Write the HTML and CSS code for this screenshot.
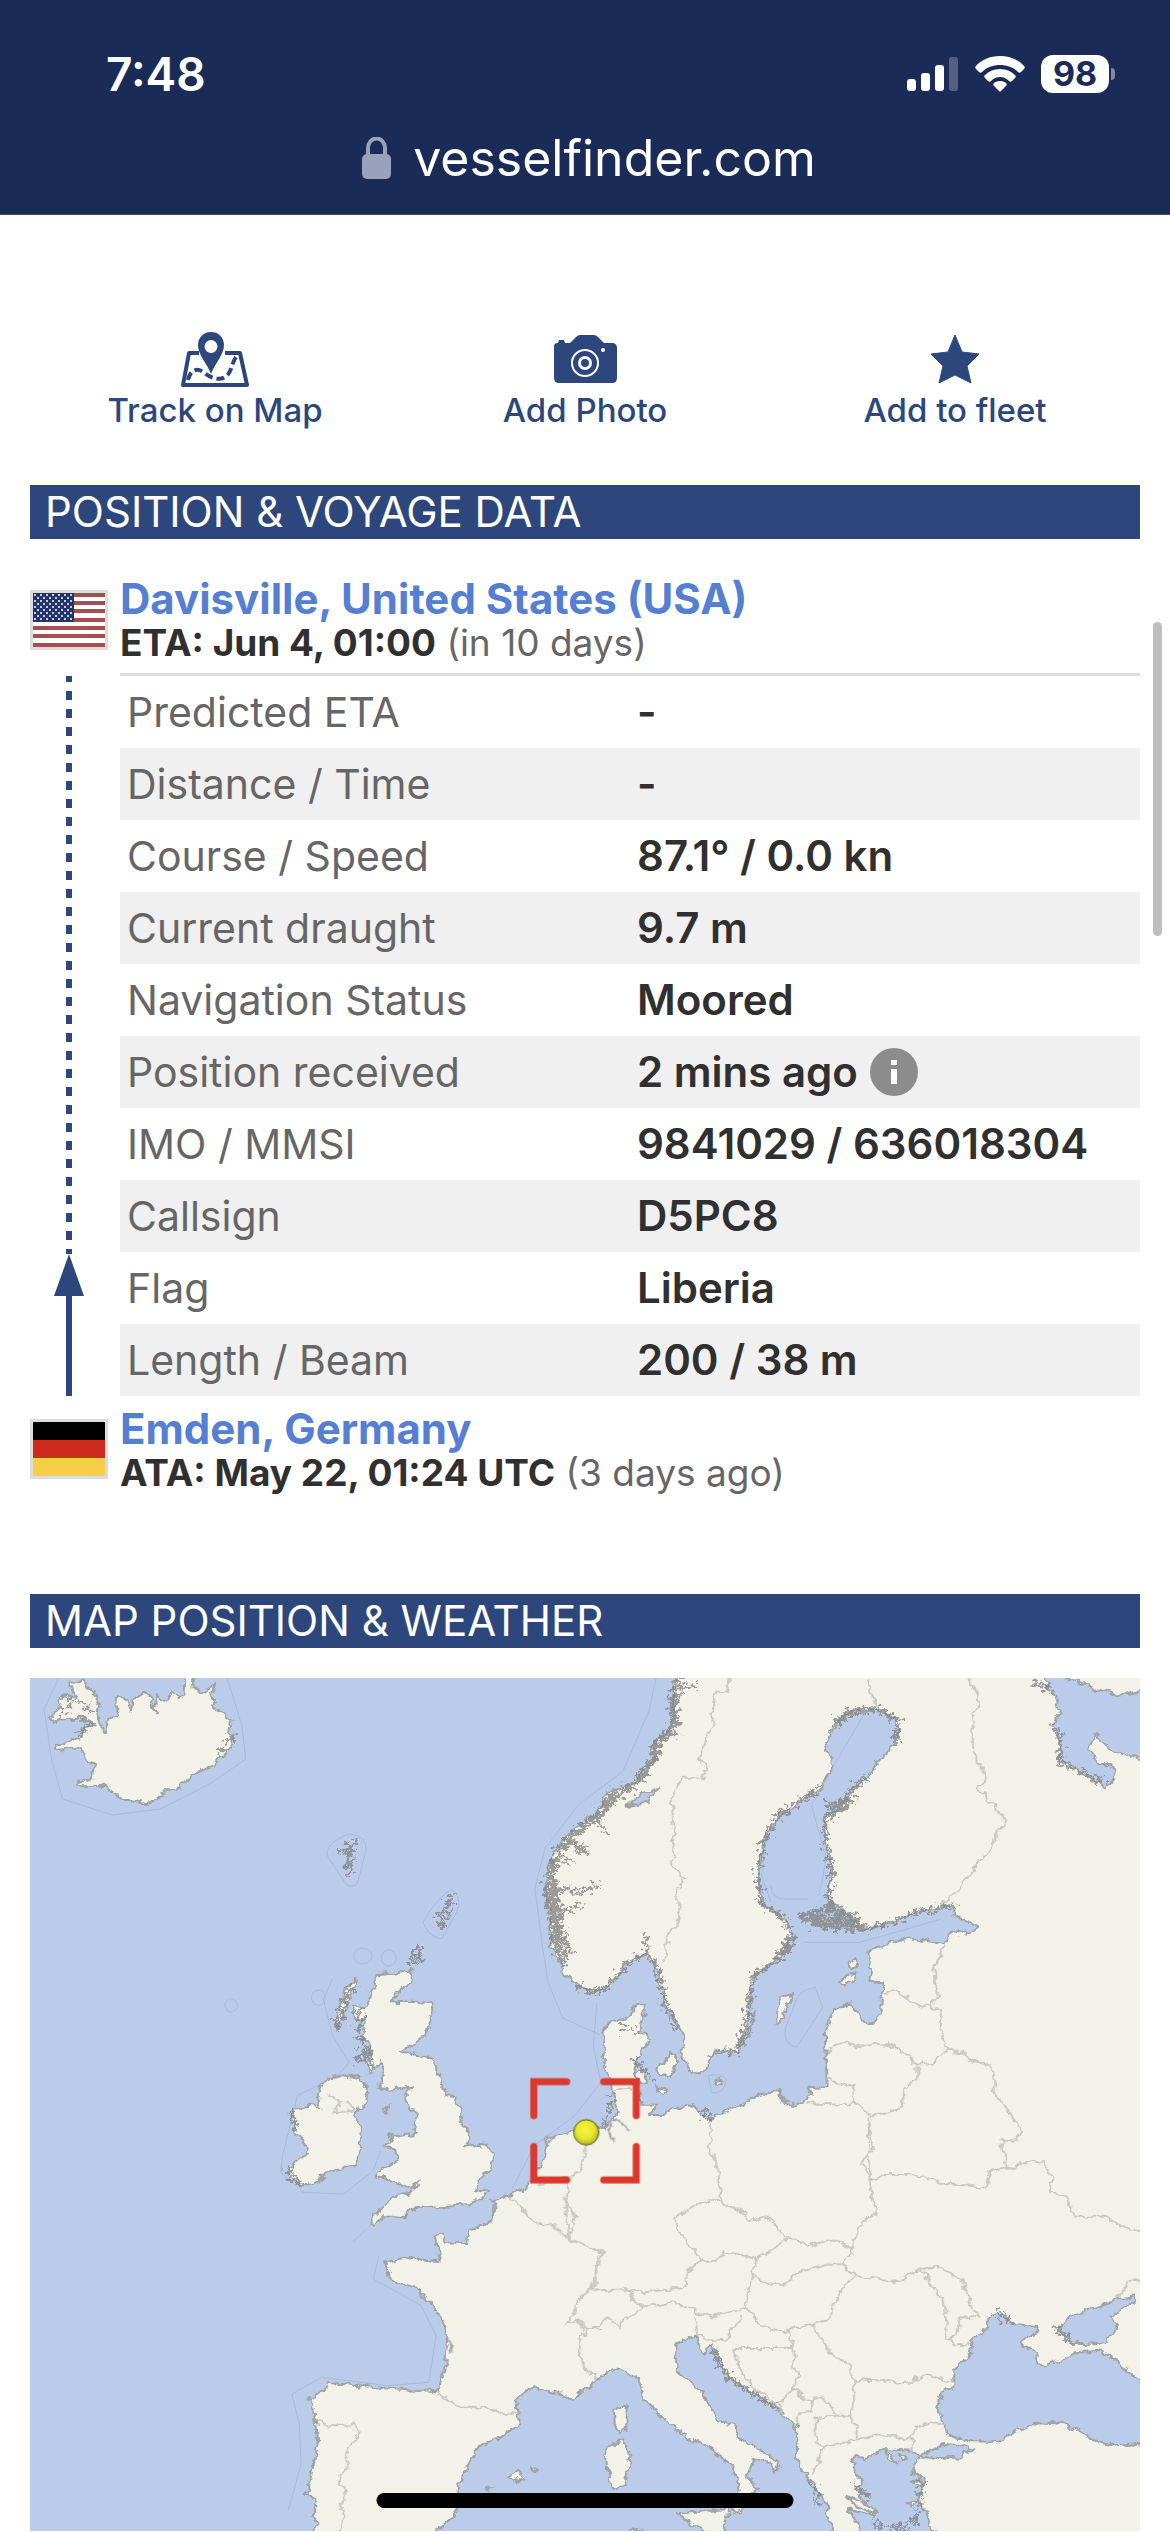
FILE: index.html
```html
<!DOCTYPE html>
<html lang="en">
<head>
<meta charset="utf-8">
<meta name="viewport" content="width=device-width">
<title>VesselFinder</title>
<link rel="stylesheet" href="styles.css">
</head>
<body>
<header class="browser">
  <div class="status">
    <span class="time">7:48</span>
    <div class="indicators">
      <svg class="signal" viewBox="0 0 52 36" aria-hidden="true"><rect x="0" y="23" width="9" height="12" rx="3"/><rect x="14" y="17" width="9" height="18" rx="3"/><rect x="28" y="9" width="9" height="26" rx="3"/><rect x="42" y="1" width="9" height="34" rx="3" opacity=".25"/></svg>
      <svg class="wifi" viewBox="0 0 50 36" aria-hidden="true"><path d="M25 0C15 0 6 4 1 10c-1 1-1 2 0 3l3 3c1 1 2 1 3 0 5-5 11-7 18-7s13 2 18 7c1 1 2 1 3 0l3-3c1-1 1-2 0-3C44 4 35 0 25 0Z"/><path d="M25 13c-6 0-11 2-15 6-1 1-1 2 0 3l3 3c1 1 2 1 3 0 2-2 5-4 9-4s7 2 9 4c1 1 2 1 3 0l3-3c1-1 1-2 0-3-4-4-9-6-15-6Z"/><path d="M25 25c-3 0-5 1-6 2s-1 2 0 3l5 5q1 1 2 0l5-5c1-1 1-2 0-3s-3-2-6-2Z"/></svg>
      <span class="battery">98</span>
    </div>
  </div>
  <div class="address">
    <svg class="lock" viewBox="0 0 29 42" aria-hidden="true"><rect y="17" width="29" height="25" rx="5"/><path d="M6 19v-8a8 9 0 0 1 17 0v8" fill="none" stroke="#9aa1bd" stroke-width="4"/></svg>
    <span>vesselfinder.com</span>
  </div>
</header>

<main class="page">
  <nav class="actions">
    <a href="#map">
      <svg class="icon" viewBox="0 0 70 56" aria-hidden="true"><path d="M19 21H9L3 53h64L60 21H45" fill="none" stroke="currentColor" stroke-width="4" stroke-linejoin="round"/><path d="M8 48c2-9 8-13 15-8 8 6 16 9 22 5 7-4 6-13 11-20" fill="none" stroke="currentColor" stroke-width="4" stroke-dasharray="8 4"/><path fill-rule="evenodd" d="M31 0C23 0 18 6 18 13c0 10 9 18 13 29 4-11 13-19 13-29C44 6 39 0 31 0Zm0 8a6 6 0 1 1 0 13 6 6 0 0 1 0-13Z"/></svg>
      <span>Track on Map</span>
    </a>
    <a href="#photo">
      <svg class="icon" viewBox="0 0 70 56" aria-hidden="true"><path d="M4 14q0-3 4-3l1-3h5l1 3h5l6-6q2-2 4-2h14q2 0 4 2l6 6h8q5 0 5 5v30q0 5-5 5H9q-5 0-5-5Z"/><circle cx="35" cy="31" r="13" fill="none" stroke="#fff" stroke-width="2"/><circle cx="35" cy="31" r="7" fill="#fff"/><circle cx="35" cy="31" r="4"/><circle cx="53" cy="18" r="2" fill="#fff"/></svg>
      <span>Add Photo</span>
    </a>
    <a href="#fleet">
      <svg class="icon" viewBox="0 0 70 56" aria-hidden="true"><path d="m35 3 7 17 17 2-12 12 4 17-16-8-16 8 4-17-12-12 17-2Z" stroke="currentColor" stroke-linejoin="round"/></svg>
      <span>Add to fleet</span>
    </a>
  </nav>

  <section class="voyage">
    <h2 class="bar">POSITION &amp; VOYAGE DATA</h2>
    <div class="route">
      <svg class="flag" viewBox="0 0 72 54" role="img" aria-label="United States">
        <defs><pattern id="stars" width="6" height="6" patternUnits="userSpaceOnUse"><circle cx="2" cy="2" r="1" fill="#fff"/><circle cx="5" cy="5" r="1" fill="#fff"/></pattern></defs>
        <path fill="#fff" d="M0 0h72v54H0z"/><path stroke="#a34f52" stroke-width="4" d="M0 2h72M0 10h72M0 18h72M0 27h72M0 35h72M0 43h72M0 52h72"/><path fill="#23346b" d="M0 0h41v29H0z"/><path fill="url(#stars)" d="M1 1h39v27H1z"/>
      </svg>
      <div class="port port-to">
        <a href="#davisville">Davisville, United States (USA)</a>
        <p><strong>ETA: Jun 4, 01:00</strong> (in 10 days)</p>
      </div>
      <div class="track" aria-hidden="true"><span class="dashes"></span><svg class="arrow" viewBox="0 0 30 42"><path d="m15 0 15 42H0Z"/></svg><span class="sailed"></span></div>
      <table class="data">
        <tr><th scope="row">Predicted ETA</th><td>-</td></tr>
        <tr><th scope="row">Distance / Time</th><td>-</td></tr>
        <tr><th scope="row">Course / Speed</th><td>87.1° / 0.0 kn</td></tr>
        <tr><th scope="row">Current draught</th><td>9.7 m</td></tr>
        <tr><th scope="row">Navigation Status</th><td>Moored</td></tr>
        <tr><th scope="row">Position received</th><td><span class="received">2 mins ago <button class="info" type="button" aria-label="Details"><svg viewBox="0 0 48 48"><circle cx="24" cy="24" r="24" fill="#8c8c8c"/><path fill="#fff" d="M21 12h6v5h-6zM21 21h6v15h-6z"/></svg></button></span></td></tr>
        <tr><th scope="row">IMO / MMSI</th><td>9841029 / 636018304</td></tr>
        <tr><th scope="row">Callsign</th><td>D5PC8</td></tr>
        <tr><th scope="row">Flag</th><td>Liberia</td></tr>
        <tr><th scope="row">Length / Beam</th><td>200 / 38 m</td></tr>
      </table>
      <svg class="flag" viewBox="0 0 72 54" role="img" aria-label="Germany"><path d="M0 0h72v18H0z"/><path fill="#cb2a1d" d="M0 18h72v18H0z"/><path fill="#f7cf46" d="M0 36h72v18H0z"/></svg>
      <div class="port port-from">
        <a href="#emden">Emden, Germany</a>
        <p><strong>ATA: May 22, 01:24 UTC</strong> (3 days ago)</p>
      </div>
    </div>
  </section>

  <section>
    <h2 class="bar">MAP POSITION &amp; WEATHER</h2>
    <svg class="map" id="map" viewBox="27 27 3001 2559" preserveAspectRatio="none" role="img" aria-label="Map of Europe with the vessel position">
      <defs>
        <filter id="rough" filterUnits="userSpaceOnUse" x="0" y="0" width="3060" height="2620"><feTurbulence type="fractalNoise" baseFrequency=".04" numOctaves="3" seed="4"/><feDisplacementMap in="SourceGraphic" scale="26" xChannelSelector="R" yChannelSelector="G"/></filter>
        <filter id="fjord" filterUnits="userSpaceOnUse" x="0" y="0" width="3060" height="2620"><feTurbulence type="fractalNoise" baseFrequency=".07" numOctaves="3" seed="9"/><feDisplacementMap in="SourceGraphic" scale="55" xChannelSelector="R" yChannelSelector="G"/></filter>
        <radialGradient id="ball" cx=".45" cy=".4" r=".6"><stop offset="0" stop-color="#f6f63c"/><stop offset=".6" stop-color="#e6e530"/><stop offset="1" stop-color="#b5b41f"/></radialGradient>
      </defs>
      <path class="sea" d="M0 0h3060v2620H0z"/>
      <!-- territorial waters -->
      <g class="waters">
        <path d="M105 27 65 120 85 270 115 390 250 438 380 420 520 340 610 270 600 170 560 27M890 495q50 5 45 50l-22 95q-15 25-35 0l-45-75q-15-40 57-70ZM1720 27l-20 100-70 180-120 100-90 130-28 120 20 170 15 110 40 110 100 50M1165 660q40 30 5 90l-30 60q-40-10-50-50 20-50 75-100M845 930l-25 60 25 110 45 80-30 40-110 60-40 180-5 50 60 60 110 5 80-70 20-60M900 1720l100-110M970 1760l-15 70 130 80 40 90-20 140-110 10-180-25-80 50 20 90 5 120-35 140M1560 1000l-10 130 20 110-70 100-110 90-60 130M2030 700l-25-80 20-180 120-100M2160 680l20-110-40-160 60-120 80-150M2030 650q0 40 40 40h60M2120 820h150l160-50 60-20M2090 1020q10-60 60-65l20 60-70 120q-40-10-30-60ZM1861 1220q40-10 48 10-5 50-40 40ZM2746 2080q20 40 70 10l50-25h50"/>
        <ellipse cx="571" cy="1009" rx="17" ry="20"/><ellipse cx="997" cy="867" rx="20" ry="24"/><ellipse cx="927" cy="861" rx="25" ry="24"/><ellipse cx="807" cy="986" rx="19" ry="23"/>
      </g>
      <g class="land" filter="url(#rough)">
        <!-- Iceland -->
        <path d="M135 38 170 35 185 62 205 80 215 110 212 140 218 162 228 192 238 150 262 140 265 85 285 85 300 125 305 90 335 75 350 80 368 130 365 75 390 98 412 70 430 85 445 75 447 20 468 20 472 60 495 72 530 42 515 75 525 95 522 118 545 130 572 155 565 185 578 205 560 250 535 270 530 290 495 303 465 318 430 358 385 370 370 395 340 402 290 392 268 385 235 350 158 352 155 330 165 342 195 325 200 290 180 270 165 238 100 242 100 228 160 208 175 175 205 165 185 150 130 150 85 158 80 148 100 125 110 90 125 75 150 85 140 60Z"/>
        <!-- Great Britain -->
        <path d="M970 915 1058 905 1055 940 1020 975 1005 1000 1060 998 1115 1002 1120 1020 1095 1100 1060 1130 1030 1148 1075 1155 1110 1170 1130 1210 1150 1275 1175 1290 1190 1320 1195 1360 1215 1410 1205 1435 1250 1425 1278 1450 1278 1495 1240 1535 1230 1560 1265 1565 1250 1590 1215 1605 1150 1610 1095 1615 1050 1620 1040 1648 1010 1640 985 1640 960 1668 945 1660 985 1610 1010 1578 1050 1575 1085 1535 1060 1560 1010 1540 985 1525 960 1522 975 1505 1018 1475 1015 1440 985 1438 1010 1405 1065 1395 1070 1330 1050 1320 1040 1280 1060 1252 1000 1262 975 1258 975 1240 990 1210 975 1175 945 1215 940 1180 950 1130 925 1110 935 1060 905 1040 900 1010 930 1015 945 990Z"/>
        <!-- Ireland -->
        <path d="M815 1240 870 1218 920 1228 940 1270 940 1300 910 1335 922 1380 915 1450 905 1490 860 1500 800 1535 765 1550 735 1530 725 1495 760 1465 780 1445 765 1415 745 1390 740 1355 735 1320 780 1310 815 1315 805 1285Z"/>
        <!-- Mainland -->
        <path d="M1776 -10 1766 90 1766 170 1721 215 1716 270 1661 340 1591 370 1561 430 1510 470 1460 520 1430 590 1420 660 1435 760 1440 840 1460 880 1465 915 1510 950 1545 970 1586 955 1646 880 1696 850 1721 900 1746 1010 1786 1080 1796 1110 1786 1150 1811 1210 1856 1210 1861 1165 1886 1145 1936 1150 1961 1090 1981 920 2041 880 2091 800 2066 750 2001 700 1996 600 2016 500 2061 430 2161 360 2196 290 2176 235 2206 165 2241 125 2321 120 2371 155 2371 225 2336 255 2291 325 2246 360 2221 410 2176 455 2181 540 2196 600 2186 690 2241 740 2271 785 2341 765 2441 725 2526 710 2526 740 2591 775 2561 790 2516 795 2496 825 2411 808 2341 825 2291 850 2301 900 2296 935 2331 940 2329 1030 2301 1065 2276 1055 2246 1000 2201 1020 2176 1090 2181 1255 2126 1258 2141 1280 2096 1308 2061 1300 2051 1268 1991 1278 1951 1310 1881 1335 1871 1355 1841 1340 1821 1305 1776 1315 1736 1335 1706 1335 1721 1310 1681 1310 1671 1245 1656 1190 1706 1110 1676 1090 1686 1040 1686 1005 1661 1015 1636 1050 1601 1055 1581 1080 1581 1190 1601 1260 1616 1330 1601 1345 1581 1375 1541 1385 1490 1385 1430 1410 1415 1460 1400 1500 1375 1545 1330 1575 1280 1595 1278 1650 1215 1690 1205 1722 1150 1720 1140 1697 1120 1700 1135 1775 1085 1775 1060 1760 990 1780 1000 1830 1075 1860 1105 1900 1145 1955 1155 2000 1150 2090 1135 2160 1125 2170 1065 2165 1000 2160 930 2150 870 2145 835 2142 825 2165 780 2185 795 2235 805 2330 785 2430 772 2475 798 2490 798 2610 1110 2610 1125 2580 1170 2550 1180 2510 1190 2430 1240 2330 1300 2305 1348 2265 1345 2190 1385 2155 1445 2170 1495 2190 1541 2150 1561 2130 1611 2095 1671 2125 1691 2195 1741 2250 1811 2310 1871 2340 1926 2395 1946 2465 1941 2490 1926 2530 1946 2530 1991 2460 1966 2420 1986 2365 2031 2385 2046 2410 2053 2380 1941 2305 1941 2270 1891 2260 1841 2170 1776 2110 1771 2025 1826 2000 1846 2060 1871 2025 1911 2120 1991 2180 2061 2230 2101 2280 2101 2390 2141 2440 2181 2505 2186 2535 2206 2610 2286 2610 2241 2520 2311 2540 2256 2460 2281 2445 2246 2380 2261 2355 2286 2375 2331 2340 2411 2345 2426 2365 2411 2410 2446 2430 2431 2490 2456 2540 2476 2610 3060 2610 3060 -10Z"/>
        <!-- islands -->
        <path d="M1665 1215 1690 1205 1695 1240 1675 1242ZM1718 1190 1748 1175 1755 1155 1778 1155 1775 1185 1760 1220 1735 1225ZM1715 1252 1755 1262 1735 1280ZM2045 1025 2060 985 2085 975 2065 1050 2045 1070ZM1960 1135 1975 1070 1990 1030 1975 1080ZM2215 935 2265 910 2260 930 2230 950ZM2240 880 2260 870 2265 895 2245 900ZM1882 1232 1898 1230 1900 1245 1888 1245ZM905 930 912 940 885 985 870 1050 852 1083 868 1010 880 960ZM985 1320 998 1305 990 1335ZM990 1395 1008 1400 1000 1410ZM1605 2225 1640 2210 1640 2270 1622 2295 1608 2265ZM1585 2335 1635 2310 1650 2360 1640 2450 1600 2458 1590 2400ZM1775 2535 1830 2528 1915 2520 1900 2610 1855 2590ZM1318 2425 1350 2405 1358 2425 1340 2440ZM1380 2395 1400 2400 1395 2408ZM1260 2465 1275 2455 1268 2470ZM2415 2435 2435 2430 2440 2455ZM2235 2480 2300 2510 2315 2535 2260 2510ZM2335 2340 2345 2370 2375 2380ZM2375 2355 2400 2365 2385 2380ZM2395 2500 2425 2498 2410 2515ZM1648 2590 1660 2575 1680 2590Z"/>
        <g class="sea">
          <!-- White Sea, Black Sea, Azov, Marmara -->
          <path d="M2741 -10 2801 85 2811 125 2791 170 2816 215 2811 275 2871 310 2936 355 2959 330 2951 285 2916 285 2891 235 2906 195 2956 245 3060 285 3060 60 2971 80 2911 60 2826 27 2800 -10Z"/>
          <path d="M3060 2170 2981 2090 2921 2045 2851 2050 2811 2075 2771 2090 2746 2080 2751 2050 2706 2022 2756 1985 2751 1972 2686 1965 2651 1930 2621 1940 2611 1980 2576 2010 2571 2055 2526 2100 2526 2155 2491 2170 2481 2225 2496 2260 2506 2295 2551 2315 2651 2320 2691 2285 2756 2260 2821 2265 2871 2285 2891 2310 2971 2332 3060 2318Z"/>
          <path d="M2841 2025 2811 1980 2841 1945 2901 1915 3011 1882 3013 1900 2951 1940 2966 1970 2936 2020 2881 2025ZM2431 2362 2471 2340 2501 2325 2551 2330 2585 2345 2546 2350 2546 2365 2481 2370ZM1640 410 1680 375 1725 355 1700 400Z"/>
        </g>
      </g>
      <!-- skerries and fjords -->
      <g class="skerries" filter="url(#fjord)">
        <path d="M1790 27 1766 90 1770 170 1721 225 1716 270 1661 345 1600 390 1561 440 1510 485 1460 540 1440 600 1428 660 1445 760 1452 840 1475 880"/>
        <path d="M1600 370l-15 45M1440 640l20 160M1450 790l40 60" />
        <path class="thin" d="M1440 655l80 10 50-20M1440 575h60M1480 520l60 30M1460 740l60-40M1490 500l30 60M1560 440l20 50M1770 60l60-10M1740 210l40-20"/>
        <path class="thin" d="M1510 955 1545 970 1586 955 1646 880 1696 850 1690 790M1700 860 1721 900 1746 1010 1780 1080M1880 1145 1936 1150 1961 1090 1981 920 2041 880 2091 800 2066 750 2001 700 1996 600 2016 500 2061 430 2161 360M2206 165 2241 125 2321 120 2371 155 2371 225M2291 325 2246 360 2221 410 2176 455 2181 540 2196 600 2186 690M2271 785 2341 765 2441 725 2526 710M2791 170 2816 215 2811 275 2871 310 2936 345M2785 65 2740 35"/>
        <path d="M2110 745 2150 735 2200 720 2250 745 2270 775 2200 770 2150 765ZM2140 750 2250 760M2180 700 2220 740M2055 860 2085 810M2180 410 2230 400 2185 450M2205 165 2245 130"/>
        <path class="thin" d="M1145 700 1165 690 1150 740 1140 780 1130 740 1160 710M1050 880 1080 840 1085 860 1060 890M855 548 890 525 910 522 885 560 892 620M880 540 905 530M895 535 890 600M905 1020 925 1060 910 1090 930 1120 915 1180 940 1140 950 1200M900 950 870 1020 855 1080M735 1320 745 1390M725 1495 735 1530 765 1545M190 160 160 200M110 130 150 90 200 130M540 250 580 190M1871 2035 1911 2120 1991 2180 2050 2220M1600 1290 1585 1370M2250 2440 2300 2490M2360 2580 2420 2550M2440 2440 2420 2580M2300 2560 2400 2590M2640 1930 2680 1960M2800 1970 2835 2020M2141 2440 2160 2500M1620 1080 1670 1080M1660 1170 1710 1230M1841 1320 1875 1360"/>
      </g>
      <!-- national borders -->
      <g class="borders" filter="url(#rough)">
        <g transform="translate(1541 0)">
          <path d="M375 27 370 65 335 75 330 185 292 265 315 295 305 330 255 325 220 380 228 500 222 590 255 630 230 665 243 720 235 775 208 795 205 860 195 880M755 27 755 60 775 115M1025 27 1050 90 1035 150 1035 240 1050 280 1070 320 1050 360 1095 415 1120 460 1080 540 985 670 945 715M960 830 930 900 940 975 922 1015 885 1010 825 962 790 975M922 1015 950 1030 945 1080 965 1145 930 1180 885 1188 850 1150 810 1125 740 1130 680 1120 640 1150M640 1230 680 1245 715 1250 710 1300M965 1145 1010 1150 1035 1175 1085 1190 1095 1260M885 1188 885 1235 850 1260 850 1310"/>
        </g>
        <g transform="translate(1541 1260)">
          <path d="M585 42 700 48 715 40 750 65 760 85 800 75 845 55 850 0M1090 0 1140 80 1170 125 1145 155 1110 150 1125 235 1145 240 1165 220 1225 220 1250 270 1245 305 1290 325 1305 380 1390 380 1430 410 1490 430M1125 235 1085 245 1072 300 1030 290 960 285 925 270 860 255 800 255 755 275 750 85 765 180 735 220 755 275 772 365 720 420 710 480 685 530M330 100 318 175 335 200 345 260 355 340M355 340 420 370 430 395 480 385 530 445 570 455 585 470 640 455 670 455 710 480M355 340 330 330 225 385 240 430 305 515 345 515 360 490 445 510 500 480 530 450M445 510 440 560 480 585 530 580 560 555 625 525 685 530 720 565 790 570 815 582 895 540 935 532 1005 570 1025 640 1050 685 1005 685 1000 725 970 750M305 515 260 545 262 590 215 600 150 610 115 600 0 605M445 560 430 595 418 655 460 705 520 730 540 720 600 705 640 695 680 600 720 565M418 655 380 670 330 685 225 640 150 655 105 630 115 600M150 655 90 690 80 720 50 690 0 720M285 685 290 740 330 750 370 755 385 715 415 685M540 720 550 780 390 780 400 830 440 890 520 970M550 780 550 840 565 860 545 900 515 940 520 970M600 705 650 790 700 830 710 870 800 875 850 885 900 855 985 880M895 540 960 650 965 740 985 770 1030 765M710 870 720 920 700 980 665 980 610 990 610 1060 635 1075 715 1055 720 1010 700 980M545 900 595 935 625 920 665 980M595 935 600 970 565 970 555 1010M635 1075 600 1155M715 1055 790 1035 870 1050 880 1015 920 1000 955 1002M870 1050 870 1085M0 475 35 490 20 520 5 605M1487 575 1450 580 1430 630M0 855 20 855 10 875M60 0 110 0"/>
        </g>
        <path d="M1530 1430 1515 1500 1485 1520 1400 1550M1320 1580 1345 1610 1410 1670 1430 1660 1485 1710 1475 1600 1490 1520M1485 1710 1568 1745M1475 1600 1500 1640 1485 1710M1568 1775 1550 1860 1520 1880 1480 1965 1510 1950 1530 1980 1568 1980M1530 1980 1510 2030 1525 2100 1560 2120M1125 2170 1180 2210 1240 2210 1310 2235 1345 2230M800 2255 830 2270 900 2265 915 2290 885 2340 885 2400 860 2425 880 2480 865 2520 880 2530 860 2590M830 1275 870 1300 850 1330 905 1325 880 1300"/>
      </g>
      <g class="rivers" filter="url(#rough)"><path d="M1595 1405v-50l30 5 22 20M1595 1355l-5 50 20 15M1155 2000l15 50M1445 1400q-30 0-22 25l15-5z"/></g>
      <g class="target"><path d="M1389 1340V1238h89M1578 1238h88v102M1389 1432v101h89M1578 1533h88v-101"/><ellipse cx="1531" cy="1390" rx="34" ry="38"/></g>
    </svg>
  </section>
</main>
<div class="scrollbar" aria-hidden="true"></div>
<div class="home" aria-hidden="true"></div>
</body>
</html>
```
FILE: styles.css
```css
* { box-sizing: border-box; }

body {
  margin: 0;
  position: relative;
  overflow-x: hidden;
  background: #fff;
  color: #666;
  font-family: Inter, "Liberation Sans", sans-serif;
}

a { color: inherit; text-decoration: none; }
h2, p { margin: 0; }

.browser {
  height: 215px;
  background: #1a2b57;
  border-bottom: 1px solid #434964;
  color: #fff;
}

.status {
  display: flex;
  align-items: center;
  justify-content: space-between;
  padding: 48px 55px 0 106px;
}

.time { font-size: 46px; line-height: 52px; font-weight: 600; }

.indicators { display: flex; align-items: center; gap: 16px; }
.signal { width: 52px; height: 36px; fill: #fff; }
.wifi { width: 50px; height: 36px; fill: #fff; }

.battery {
  position: relative;
  width: 68px;
  height: 38px;
  margin-right: 6px;
  border-radius: 12px;
  background: #fff;
  color: #1a2b57;
  font-size: 34px;
  line-height: 38px;
  font-weight: 700;
  text-align: center;
}

.battery::after {
  content: "";
  position: absolute;
  right: -6px;
  top: 13px;
  width: 4px;
  height: 12px;
  border-radius: 0 4px 4px 0;
  background: #8089a6;
}

.address {
  display: flex;
  justify-content: center;
  align-items: center;
  gap: 22px;
  margin-top: 28px;
  padding-left: 8px;
  font-size: 50px;
  line-height: 60px;
}

.lock { width: 29px; height: 42px; fill: #9aa1bd; }

.page { padding: 0 30px; }

.actions {
  display: grid;
  grid-template-columns: repeat(3, 1fr);
  padding: 117px 0 53px;
  color: #2d477c;
  font-size: 33px;
  line-height: 44px;
  font-weight: 500;
}

.actions a { display: flex; flex-direction: column; align-items: center; }
.icon { width: 70px; height: 56px; fill: currentColor; }

.bar {
  padding: 0 15px;
  background: #2d477c;
  color: #fff;
  font-size: 42px;
  line-height: 54px;
  font-weight: 400;
}

.route {
  display: grid;
  grid-template-columns: 78px 1fr;
  column-gap: 12px;
  padding: 38px 0 99px;
}

.flag {
  width: 78px;
  height: 60px;
  margin-top: 13px;
  border: 3px solid #ddd;
}

.port { font-size: 37px; line-height: 44px; }
.port a { display: block; color: #567fd3; font-size: 42px; font-weight: 700; }
.port strong { color: #303030; font-weight: 700; }
.port-to { padding-bottom: 8px; }
.port-from { padding-top: 11px; }
.data ~ .flag { margin-top: 23px; }

.track { display: flex; flex-direction: column; align-items: center; padding-top: 3px; }

.dashes {
  flex: 1;
  width: 6px;
  background: repeating-linear-gradient(#2d477c 0 6px, transparent 6px 15px, #2d477c 15px 18px);
}

.arrow { width: 30px; height: 42px; fill: #2d477c; }
.sailed { width: 6px; height: 100px; background: #2d477c; }

.data {
  width: 100%;
  table-layout: fixed;
  border-collapse: separate;
  border-spacing: 0;
  border-top: 3px solid #ddd;
  font-size: 41px;
  line-height: 48px;
}

.data th, .data td { height: 72px; padding: 0 7px; text-align: left; white-space: nowrap; }
.data th { font-weight: 400; }
.data td { color: #303030; font-size: 42px; font-weight: 600; }
.data tr:nth-child(even) { background: #f0f0f0; }

.received { display: flex; align-items: center; gap: 12px; }
.info { width: 48px; height: 48px; padding: 0; border: 0; background: none; }
.info svg { display: block; }

.map { display: block; width: 100%; aspect-ratio: 1110 / 853; margin-top: 30px; }
.map path, .map ellipse { vector-effect: non-scaling-stroke; }
.sea { fill: #bacce9; }
.land { fill: #f2f2e9; stroke: #a0a3a4; stroke-width: 2px; stroke-linejoin: round; }
.waters { fill: none; stroke: #a9bbda; stroke-width: 1px; }
.skerries { fill: none; stroke: #858585; stroke-width: 8px; stroke-dasharray: 7px 1px; opacity: .8; }
.skerries .thin { stroke-width: 4px; }
.borders { fill: none; stroke: #c9c9c2; stroke-width: 2px; }
.rivers { fill: none; stroke: #a3a7ab; stroke-width: 2px; }
.target { fill: none; stroke: #dc382b; stroke-width: 7px; stroke-linecap: round; stroke-linejoin: miter; }
.target ellipse { fill: url(#ball); stroke: #4c4b1c; stroke-width: 1px; }

.scrollbar {
  position: absolute;
  top: 622px;
  right: 8px;
  width: 9px;
  height: 314px;
  border-radius: 5px;
  background: #bebebe;
}

.home {
  position: fixed;
  bottom: 24px;
  left: 50%;
  width: 417px;
  height: 15px;
  border-radius: 8px;
  background: #000;
  transform: translateX(-50%);
}
```
